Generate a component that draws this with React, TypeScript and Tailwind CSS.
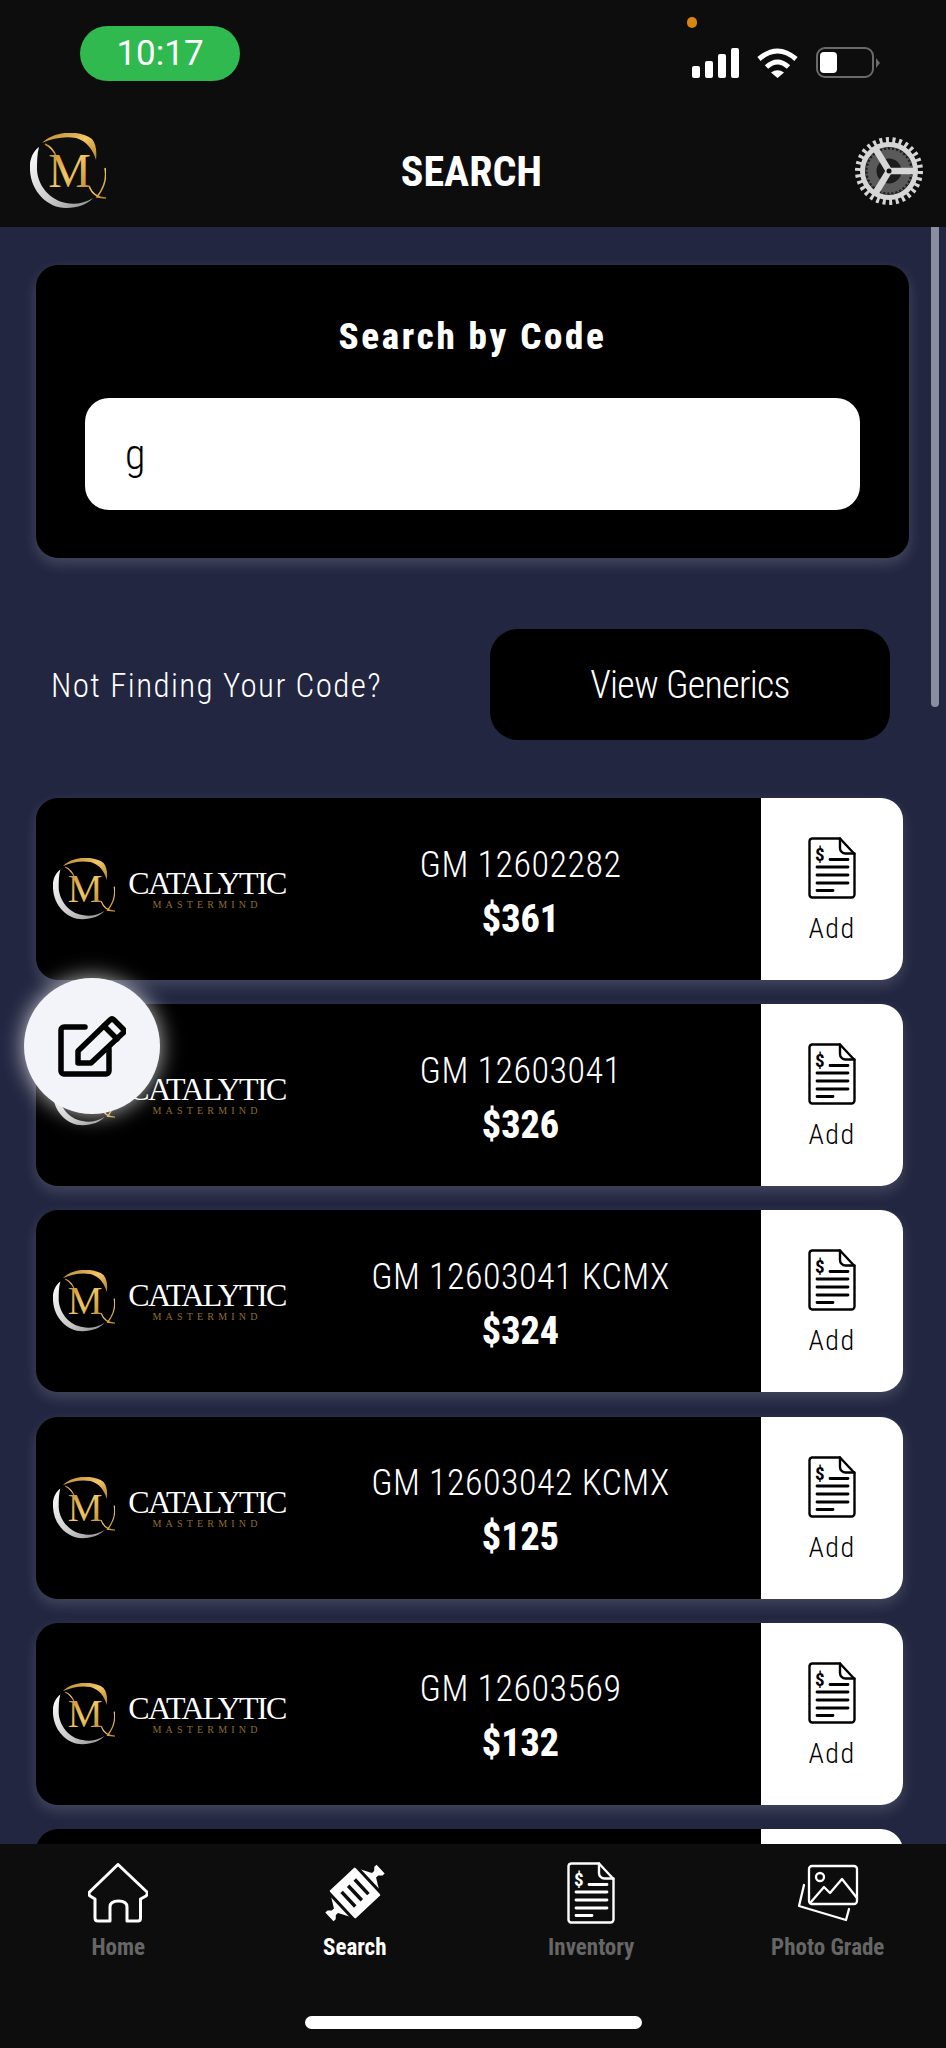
const codes = [
  { code: 'GM 12602282', price: '$361' },
  { code: 'GM 12603041', price: '$326' },
  { code: 'GM 12603041 KCMX', price: '$324' },
  { code: 'GM 12603042 KCMX', price: '$125' },
  { code: 'GM 12603569', price: '$132' },
]

function Logo({ size }: { size: number }) {
  return (
    <svg width={size} height={size} viewBox="10 13 76 76" className="shrink-0">
      <defs>
        <linearGradient id="gold" x1="0" y1="0" x2="1" y2="1">
          <stop offset="0" stopColor="#b8812a" />
          <stop offset="0.5" stopColor="#f3c766" />
          <stop offset="1" stopColor="#b37d26" />
        </linearGradient>
        <linearGradient id="silver" x1="0" y1="0" x2="1" y2="1">
          <stop offset="0" stopColor="#ffffff" />
          <stop offset="0.6" stopColor="#c9c9c9" />
          <stop offset="1" stopColor="#8c8c8c" />
        </linearGradient>
      </defs>
      <path d="M19 27C12 32 9 42 10 50C11 72 28 88 46 88C58 88 68 84 73 78C65 83 55 85 46 83C30 80 18 66 17 50C17 42 17 34 19 27Z" fill="url(#silver)" />
      <path d="M22 23C35 10 60 10 72 19C76 24 77 31 76 40C73 30 67 21 56 18C45 16 33 18 22 23Z" fill="url(#gold)" />
      <path d="M25 24C31 27 34 31 36 36" stroke="url(#gold)" strokeWidth="1.5" fill="none" />
      <path d="M85 48C87 58 84 68 77 77L86 78C78 78 72 74 69 66" stroke="url(#gold)" strokeWidth="1.5" fill="none" />
      <text x="49.500" y="67" textAnchor="middle" fontFamily="'Liberation Serif', serif" fontSize="48" fill="url(#gold)">
        M
      </text>
    </svg>
  )
}

function Gear() {
  return (
    <svg width="70" height="70" viewBox="0 0 70 70" className="shrink-0">
      <circle cx="35" cy="35" r="31" fill="none" stroke="#d6d6d6" strokeWidth="6" strokeDasharray="3 3.49" />
      <circle cx="35" cy="35" r="26.500" fill="#1c1c1c" stroke="#d6d6d6" strokeWidth="5" />
      <circle cx="35" cy="35" r="17" fill="none" stroke="#5a5a5a" strokeWidth="9" />
      <circle cx="35" cy="35" r="22" fill="none" stroke="#5a5a5a" strokeWidth="3" strokeDasharray="2 2" />
      <path d="M35 35L21 12M35 35H62M35 35L21 58" stroke="#d6d6d6" strokeWidth="6.500" />
      <circle cx="35" cy="35" r="2.500" fill="#111" />
    </svg>
  )
}

function DocIcon({ color }: { color: string }) {
  return (
    <svg width="48" height="62" viewBox="0 0 48 62" fill="none" stroke={color} strokeWidth="2.400" strokeLinecap="round" strokeLinejoin="round" className="shrink-0">
      <path d="M4 1.500H32L46.500 17V57.500A3 3 0 0 1 43.500 60.500H4A3 3 0 0 1 1.500 57.500V4A3 3 0 0 1 4 1.500Z" />
      <path d="M32 1.500V11A5.500 5.500 0 0 0 37.500 16.500H46.500" />
      <path d="M22 22.500H40M9 30H40M9 38H40M9 46H40M9 53.500H25" strokeWidth="2.800" />
      <text x="7" y="24" fontFamily="'Roboto', sans-serif" fontWeight="700" fontSize="19" fill={color} stroke="none">
        $
      </text>
    </svg>
  )
}

function CodeRow({ code, price }: { code: string; price: string }) {
  return (
    <div className="flex h-[182px] w-[867px] shrink-0 overflow-hidden rounded-[22px] shadow-[0_6px_14px_rgba(255,255,255,0.15)]">
      <div className="flex flex-1 items-center bg-black pl-[17px] text-white">
        <Logo size={62} />
        <div className="ml-3 flex w-[160px] flex-col items-center">
          <span className="font-['Liberation_Serif',serif] text-[32px] leading-[32px] font-stretch-normal tracking-[-1.6px] whitespace-nowrap">CATALYTIC</span>
          <span className="font-['Liberation_Serif',serif] text-[10px] leading-[12px] font-stretch-normal tracking-[4.2px] whitespace-nowrap text-[#8f6d2e]">MASTERMIND</span>
        </div>
        <div className="flex flex-1 flex-col items-center pt-[5px] pr-[7px]">
          <span className="text-[36px] leading-[54px] font-[350] tracking-[0.5px] whitespace-nowrap">{code}</span>
          <span className="text-[38px] leading-[54px] font-extrabold">{price}</span>
        </div>
      </div>
      <div className="flex w-[142px] flex-col items-center bg-white pt-[39px] text-black">
        <DocIcon color="#000000" />
        <span className="mt-[14px] text-[28px] leading-[32px] font-light tracking-[1.5px]">Add</span>
      </div>
    </div>
  )
}

function NavItem({ label, active, icon }: { label: string; active?: boolean; icon: React.ReactNode }) {
  return (
    <div className="flex flex-col items-center">
      <div className="flex h-[80px] items-center">{icon}</div>
      <span className={`mt-[1px] text-[23px] leading-[28px] font-bold whitespace-nowrap ${active ? 'text-white' : 'text-[#666666]'}`}>{label}</span>
    </div>
  )
}

export default function App() {
  return (
    <div className="relative flex h-[2048px] w-[946px] flex-col overflow-hidden bg-[#222640] font-['Roboto',sans-serif] font-stretch-condensed text-white">
      <header className="relative h-[227px] shrink-0 bg-[#0d0d0d]">
        <div className="flex items-start justify-between pt-[26px] pr-[66px] pl-[80px]">
          <div className="flex h-[55px] w-[160px] items-center justify-center rounded-[28px] bg-[#2fb94f] text-[35px] leading-none font-normal font-stretch-normal">10:17</div>
          <div className="flex items-end gap-[18px] pt-[21px]">
            <div className="flex h-[31px] items-end gap-[5px]">
              <span className="h-[12px] w-[8px] rounded-[2px] bg-white" />
              <span className="h-[17px] w-[8px] rounded-[2px] bg-white" />
              <span className="h-[24px] w-[8px] rounded-[2px] bg-white" />
              <span className="h-[30px] w-[8px] rounded-[2px] bg-white" />
            </div>
            <svg width="41" height="31" viewBox="0 0 41 31" fill="none" stroke="white" strokeWidth="5">
              <path d="M2 12Q20.500 -4 39 12" />
              <path d="M9.500 20Q20.500 10 31.500 20" />
              <path d="M14 25.500L20.500 31L27 25.500Q20.500 21 14 25.500Z" fill="white" stroke="none" />
            </svg>
            <div className="flex items-center">
              <div className="flex h-[31px] w-[58px] items-center rounded-[9px] border-[2.5px] border-[#6a6a6a] pl-[2px]">
                <span className="h-[21px] w-[17px] rounded-[4px] bg-white" />
              </div>
              <span className="ml-[2px] h-0 w-0 border-y-[5px] border-l-[4px] border-y-transparent border-l-[#6a6a6a]" />
            </div>
          </div>
        </div>
        <span className="absolute top-[17px] left-[687px] h-[11px] w-[10px] rounded-full bg-[#d9860f]" />
        <div className="absolute top-[133px] right-[22px] left-[30px] flex items-center">
          <Logo size={76} />
          <span className="flex-1 pt-[2px] pr-[17px] text-center text-[42px] leading-none font-bold">SEARCH</span>
          <Gear />
        </div>
      </header>

      <main className="flex min-h-0 flex-1 flex-col overflow-hidden pt-[38px] pl-[36px]">
        <section className="flex h-[293px] w-[873px] shrink-0 flex-col items-center rounded-[22px] bg-black px-[49px] pt-[48px] shadow-[0_6px_14px_rgba(255,255,255,0.16)]">
          <h1 className="text-[37px] leading-[48px] font-extrabold tracking-[2.7px]">Search by Code</h1>
          <input readOnly value="g" className="mt-[37px] h-[112px] w-full rounded-3xl bg-white pl-[40px] text-[42px] font-light text-black outline-none" />
        </section>

        <div className="mt-[71px] flex h-[111px] shrink-0 items-center">
          <span className="ml-[15px] w-[439px] pt-[2px] text-[33px] font-light tracking-[1.400px]">Not Finding Your Code?</span>
          <button className="flex h-[111px] w-[400px] items-center justify-center rounded-[28px] bg-black pt-[2px] text-[38px] font-light tracking-[-0.7px]">View Generics</button>
        </div>

        <div className="mt-[58px] flex flex-col gap-[24.200px]">
          {codes.map((row) => (
            <CodeRow key={row.code} code={row.code} price={row.price} />
          ))}
          <div className="flex h-[182px] w-[867px] shrink-0 justify-end overflow-hidden rounded-[22px] bg-black">
            <div className="w-[142px] bg-white" />
          </div>
        </div>
      </main>

      <nav className="relative h-[204px] shrink-0 bg-[#0d0d0d]">
        <div className="grid grid-cols-4 pt-[9px]">
          <NavItem
            label="Home"
            icon={
              <svg width="60" height="60" viewBox="8 8 60 60" fill="none" stroke="white" strokeWidth="3" strokeLinejoin="round">
                <path d="M38 9.500L67 37Q68 39 66 41L60.500 44V63Q60.500 66 58 66H47V52Q47 46 38.500 46Q30 46 30 52V66H18Q15 66 15 63V44L10 41Q8 39 9.500 37Z" />
              </svg>
            }
          />
          <NavItem
            label="Search"
            active
            icon={
              <svg width="68" height="68" viewBox="11 4 68 68">
                <g transform="rotate(-43 45 38)">
                  <path d="M10 32H13L16 35H19L28 19H62L71 35H74L77 32H80V44H77L74 41H71L62 57H28L19 41H16L13 44H10Z" fill="white" />
                  <path d="M26 16V60M64 16V60" stroke="#0d0d0d" strokeWidth="3" />
                  <path d="M36 28V48M45 28V48M54 28V48" stroke="#0d0d0d" strokeWidth="3.500" />
                </g>
              </svg>
            }
          />
          <NavItem label="Inventory" icon={<DocIcon color="white" />} />
          <NavItem
            label="Photo Grade"
            icon={
              <svg width="62" height="60" viewBox="12 9 62 60" fill="none" stroke="white" strokeWidth="2.300" strokeLinecap="round" strokeLinejoin="round">
                <rect x="24" y="12" width="48" height="38" rx="3" />
                <circle cx="35" cy="23" r="4" />
                <path d="M26 48L39 33L45 39L57 25L72 44" />
                <path d="M19 31L14 52L61 66L64 55" />
              </svg>
            }
          />
        </div>
        <span className="absolute top-[172px] left-[305px] h-[13px] w-[337px] rounded-full bg-white" />
      </nav>

      <span className="absolute top-[227px] left-[931px] h-[480px] w-[8px] rounded-b-full bg-[#8b8da0]" />

      <button className="absolute top-[978px] left-[24px] flex h-[136px] w-[136px] items-center justify-center rounded-full bg-[#f2f4f9] shadow-[0_0_22px_rgba(255,255,255,0.75)]">
        <svg width="68" height="61" viewBox="0 0 68 61" fill="none" stroke="black" strokeWidth="5.500" strokeLinejoin="round" strokeLinecap="round" className="-ml-[1px]">
          <path d="M27 11H6A3 3 0 0 0 3 14V55A3 3 0 0 0 6 58H48A3 3 0 0 0 51 55V33" />
          <path d="M20 35L52 4Q54 2 56 4L65 13Q67 15 65 17L33 47H20Z" />
          <path d="M46 10L59 23" />
        </svg>
      </button>
    </div>
  )
}
